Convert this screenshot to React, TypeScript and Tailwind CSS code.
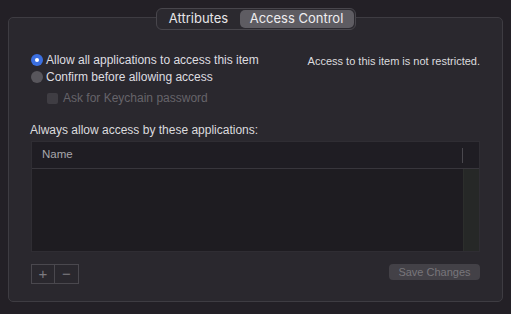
import React from "react"

const body = { fontFamily: "'Liberation Sans', Arial, sans-serif" }
const tabs = { fontFamily: "Inter, 'Liberation Sans', sans-serif" }

function Radio({ checked, label }: { checked?: boolean; label: string }) {
  return (
    <div className="flex h-[17px] items-center gap-[3px]">
      {checked ? (
        <span className="flex h-[12px] w-[12px] items-center justify-center rounded-full bg-[#3b6fe0]">
          <span className="h-[4px] w-[4px] rounded-full bg-white" />
        </span>
      ) : (
        <span className="h-[12px] w-[12px] rounded-full bg-[#58565c]" />
      )}
      <span className="text-[12px] text-[#dedde0]">{label}</span>
    </div>
  )
}

export default function App() {
  return (
    <div className="flex h-[314px] w-[511px] flex-col bg-[#232026] pt-[8px]" style={body}>
      {/* segmented tabs */}
      <div className="relative z-10 flex justify-center" style={tabs}>
        <div className="flex h-[22px] w-[200px] rounded-[6px] border border-[#48464c] bg-[#2b292f] p-[1px]">
          <div className="flex w-[82px] items-center justify-center text-[13px] text-[#e6e5e8]">Attributes</div>
          <div className="flex flex-1 items-center justify-center rounded-[5px] bg-[#5e5c62] text-[13px] text-[#eeedf0]">
            Access Control
          </div>
        </div>
      </div>

      {/* panel */}
      <div className="mx-[8px] -mt-[13px] flex h-[285px] flex-col rounded-[5px] border border-[#3e3c42] bg-[#2a282e] px-[22px] pt-[33px]">
        <div className="flex justify-between">
          <div className="flex flex-col">
            <Radio checked label="Allow all applications to access this item" />
            <Radio label="Confirm before allowing access" />
            <div className="ml-[16px] mt-[4px] flex items-center gap-[5px]">
              <span className="h-[11px] w-[11px] rounded-[2px] bg-[#3f3d43]" />
              <span className="text-[12px] text-[#66646a]">Ask for Keychain password</span>
            </div>
          </div>
          <div className="pt-[2px] text-[11px] text-[#dcdbde]">Access to this item is not restricted.</div>
        </div>

        <div className="-ml-[1px] mt-[14px] text-[12px] text-[#dcdbde]">Always allow access by these applications:</div>

        <div className="mt-[2px] flex h-[111px] flex-col border border-[#2f2d33] bg-[#1e1c21]">
          <div className="flex h-[27px] items-center border-b border-[#38363c] bg-[#1f1d23]">
            <div className="flex h-[15px] flex-1 items-center border-r border-[#4a484e] pl-[10px] text-[11.5px] text-[#a8a6ab]">
              Name
            </div>
            <div className="w-[16px]" />
          </div>
          <div className="flex flex-1">
            <div className="flex-1" />
            <div className="w-[16px] border-l border-[#2c2e2c] bg-[#262827]" />
          </div>
        </div>

        <div className="mt-[12px] flex items-start justify-between">
          <div className="flex h-[20px] border border-[#4a484e]">
            <div className="flex w-[23px] items-center justify-center border-r border-[#4a484e] text-[15px] text-[#7d7b80]">+</div>
            <div className="flex w-[23px] items-center justify-center text-[15px] text-[#7d7b80]">−</div>
          </div>
          <div className="flex h-[16px] w-[91px] items-center justify-center rounded-[4px] bg-[#434147] text-[11px] text-[#78767b]">
            Save Changes
          </div>
        </div>
      </div>
    </div>
  )
}
